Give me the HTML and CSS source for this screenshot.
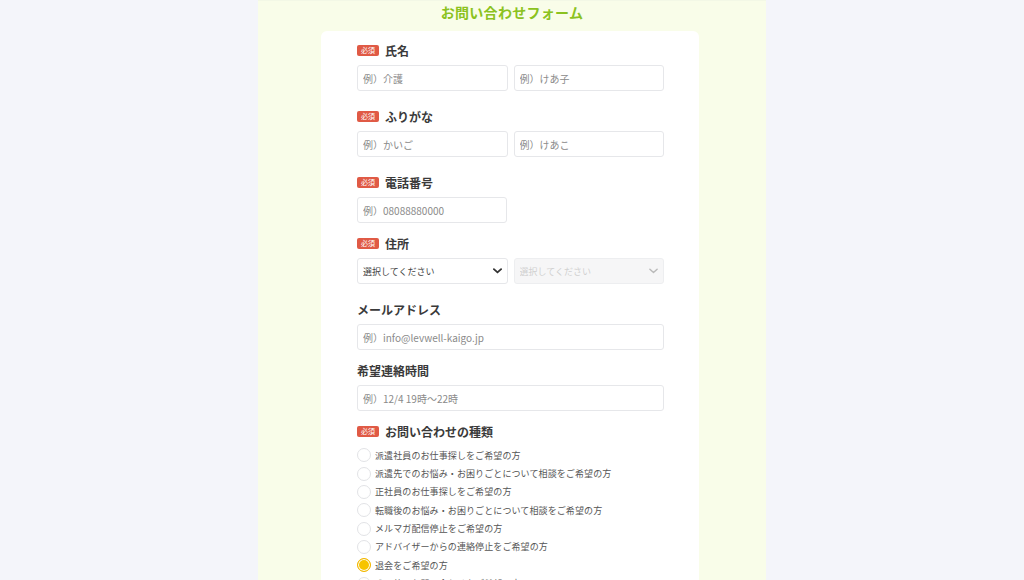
FILE: index.html
```html
<!DOCTYPE html>
<html lang="ja">
<head>
    <meta charset="UTF-8">
    <meta name="viewport" content="width=device-width, initial-scale=1.0">
    <title>お問い合わせフォーム</title>
    <link rel="stylesheet" href="styles.css">
</head>
<body>

<div class="form-page">
    <h1>お問い合わせフォーム</h1>

    <form class="form-card">
        <div class="field field-wide">
            <div class="field-label"><span class="required">必須</span>氏名</div>
            <div class="field-row">
                <input type="text" placeholder="例）介護">
                <input type="text" placeholder="例）けあ子">
            </div>
        </div>

        <div class="field field-wide">
            <div class="field-label"><span class="required">必須</span>ふりがな</div>
            <div class="field-row">
                <input type="text" placeholder="例）かいご">
                <input type="text" placeholder="例）けあこ">
            </div>
        </div>

        <div class="field">
            <div class="field-label"><span class="required">必須</span>電話番号</div>
            <input class="half" type="tel" placeholder="例）08088880000">
        </div>

        <div class="field field-wide">
            <div class="field-label"><span class="required">必須</span>住所</div>
            <div class="field-row">
                <div class="select-box">
                    <select>
                        <option>選択してください</option>
                    </select>
                    <svg class="chevron" viewBox="0 0 10 6" width="9" height="6"><path d="M1 1l4 3.6L9 1" fill="none" stroke="currentColor" stroke-width="2" stroke-linecap="round" stroke-linejoin="round"/></svg>
                </div>
                <div class="select-box disabled">
                    <select disabled>
                        <option>選択してください</option>
                    </select>
                    <svg class="chevron" viewBox="0 0 10 6" width="9" height="6"><path d="M1 1l4 3.6L9 1" fill="none" stroke="currentColor" stroke-width="1.6" stroke-linecap="round" stroke-linejoin="round"/></svg>
                </div>
            </div>
        </div>

        <div class="field">
            <div class="field-label">メールアドレス</div>
            <input type="email" placeholder="例）info@levwell-kaigo.jp">
        </div>

        <div class="field">
            <div class="field-label">希望連絡時間</div>
            <input type="text" placeholder="例）12/4 19時〜22時">
        </div>

        <div class="field">
            <div class="field-label"><span class="required">必須</span>お問い合わせの種類</div>
            <div class="radio-list">
                <label class="radio"><input type="radio" name="kind"><span class="dot"></span>派遣社員のお仕事探しをご希望の方</label>
                <label class="radio"><input type="radio" name="kind"><span class="dot"></span>派遣先でのお悩み・お困りごとについて相談をご希望の方</label>
                <label class="radio"><input type="radio" name="kind"><span class="dot"></span>正社員のお仕事探しをご希望の方</label>
                <label class="radio"><input type="radio" name="kind"><span class="dot"></span>転職後のお悩み・お困りごとについて相談をご希望の方</label>
                <label class="radio"><input type="radio" name="kind"><span class="dot"></span>メルマガ配信停止をご希望の方</label>
                <label class="radio"><input type="radio" name="kind"><span class="dot"></span>アドバイザーからの連絡停止をご希望の方</label>
                <label class="radio"><input type="radio" name="kind" checked><span class="dot"></span>退会をご希望の方</label>
                <label class="radio"><input type="radio" name="kind"><span class="dot"></span>その他のお問い合わせをご希望の方</label>
            </div>
        </div>
    </form>
</div>

</body>
</html>
```

FILE: styles.css
```css
body {
    margin: 0;
    background-color: #f4f5fa;
    font-family: "Noto Sans CJK JP", "Noto Sans", sans-serif;
    color: #3a3a3a;
}
.form-page {
    width: 508px;
    min-height: 620px;
    margin: 0 auto;
    background: #f9fde9;
    border-top: 1px solid #f3f8e6;
}
.form-page h1 {
    margin: 0 0 6px;
    height: 24px;
    line-height: 22px;
    font-size: 14px;
    font-weight: bold;
    text-align: center;
    color: #8bc220;
    letter-spacing: 0.3px;
}
.form-card {
    width: 378px;
    margin: 0 0 0 63px;
    box-sizing: border-box;
    padding: 11px 35px 20px 36px;
    background: #ffffff;
    border-radius: 6px;
}
.field {
    margin-bottom: 12px;
}
.field-wide {
    margin-bottom: 17px;
}
.field-label {
    display: flex;
    align-items: center;
    gap: 6px;
    height: 16px;
    margin-bottom: 7px;
    font-size: 12px;
    font-weight: bold;
    color: #3a3a3a;
}
.required {
    display: inline-block;
    width: 22px;
    height: 11px;
    line-height: 11px;
    border-radius: 2px;
    background: #e05a45;
    color: #ffffff;
    font-size: 7px;
    font-weight: normal;
    text-align: center;
}
.field-row {
    display: flex;
    gap: 6px;
}
.field-row > * {
    flex: 1;
    min-width: 0;
}
.form-card input[type="text"],
.form-card input[type="tel"],
.form-card input[type="email"],
.form-card select {
    display: block;
    width: 100%;
    height: 26px;
    box-sizing: border-box;
    margin: 0;
    padding: 0 5px;
    border: 1px solid #e6e7ea;
    border-radius: 3px;
    background: #ffffff;
    font-family: inherit;
    font-size: 10px;
    color: #3a3a3a;
    outline: none;
}
.form-card input.half {
    width: 150px;
}
.form-card input::placeholder {
    color: #8a8a8a;
}
.select-box {
    position: relative;
}
.form-card select {
    appearance: none;
    font-size: 9px;
    color: #444;
}
.select-box .chevron {
    position: absolute;
    right: 6px;
    top: 10px;
    color: #333;
}
.select-box.disabled select {
    background: #f3f3f4;
    color: #bdbdbd;
}
.select-box.disabled .chevron {
    color: #b9b9b9;
}
.radio-list {
    display: flex;
    flex-direction: column;
}
.radio {
    display: flex;
    align-items: center;
    gap: 4px;
    height: 18.35px;
    font-size: 9px;
    color: #555;
    letter-spacing: 0.1px;
}
.radio input {
    display: none;
}
.radio .dot {
    width: 14px;
    height: 14px;
    box-sizing: border-box;
    border: 1px solid #e2e3e6;
    border-radius: 50%;
    background: #ffffff;
}
.radio input:checked + .dot {
    border: 1px solid #f2b600;
    background: #f7c400;
    box-shadow: inset 0 0 0 1px #ffffff;
}
```
